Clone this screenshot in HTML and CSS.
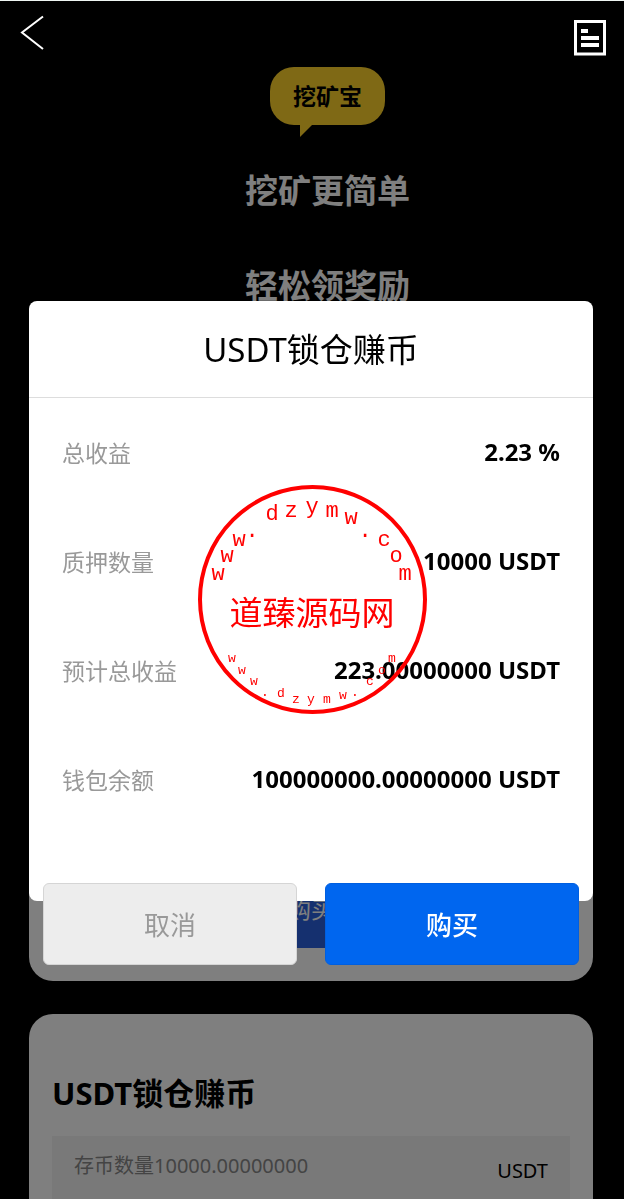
FILE: index.html
```
<!DOCTYPE html>
<html lang="zh-CN">
<head>
    <meta charset="UTF-8">
    <meta name="viewport" content="width=device-width, initial-scale=1.0">
    <title>挖矿宝</title>
    <link rel="stylesheet" href="styles.css">
</head>
<body class="modal-open">
    <header class="topbar">
        <button class="icon-button" type="button" aria-label="返回">
            <svg width="26" height="36" viewBox="0 0 26 36" fill="none" stroke="#fff" stroke-width="2">
                <path d="M23 1.5 L2 17.5 L23 34"/>
            </svg>
        </button>
        <button class="icon-button" type="button" aria-label="订单">
            <svg class="order-icon" width="32" height="36" viewBox="0 0 32 36">
                <rect x="1.5" y="1.5" width="29" height="32.5" fill="none" stroke="#fff" stroke-width="3"/>
                <path d="M7 9h7v4h-7zM7 16h18v4h-18zM7 23h18v4h-18z" fill="#fff"/>
            </svg>
        </button>
    </header>

    <main class="page">
        <section class="hero">
            <div class="bubble">挖矿宝</div>
            <h1>挖矿更简单</h1>
            <h1>轻松领奖励</h1>
        </section>

        <section class="card card-first">
            <button class="card-buy" type="button">购买</button>
        </section>

        <section class="card">
            <h2>USDT锁仓赚币</h2>
            <label class="field">
                <input type="text" placeholder="存币数量10000.00000000">
                <span>USDT</span>
            </label>
        </section>
    </main>

    <div class="overlay">
        <div class="modal" role="dialog" aria-labelledby="modalTitle">
            <div class="modal-content">
                <h3 id="modalTitle">USDT锁仓赚币</h3>
                <dl class="details">
                    <div class="detail"><dt>总收益</dt><dd>2.23 %</dd></div>
                    <div class="detail"><dt>质押数量</dt><dd>10000 USDT</dd></div>
                    <div class="detail"><dt>预计总收益</dt><dd>223.00000000 USDT</dd></div>
                    <div class="detail"><dt>钱包余额</dt><dd>100000000.00000000 USDT</dd></div>
                </dl>
            </div>
            <div class="actions">
                <button class="cancel" type="button">取消</button>
                <button class="confirm" type="button">购买</button>
            </div>
        </div>
    </div>

    <svg class="stamp" width="250" height="250" viewBox="-3 0 250 250">
        <circle cx="122.5" cy="124.5" r="112.5" fill="none" stroke="#f00" stroke-width="4"/>
        <g class="stamp-top">
            <text x="28" y="105">w</text>
            <text x="37" y="87">w</text>
            <text x="49" y="71">w</text>
            <text x="62" y="62">.</text>
            <text x="82" y="45">d</text>
            <text x="101" y="42">z</text>
            <text x="122" y="38">y</text>
            <text x="142" y="42">m</text>
            <text x="161" y="49">w</text>
            <text x="175" y="62">.</text>
            <text x="194" y="71">c</text>
            <text x="206" y="87">o</text>
            <text x="215" y="105">m</text>
        </g>
        <text class="stamp-name" x="122" y="150">道臻源码网</text>
        <g class="stamp-bottom">
            <text x="42" y="187">w</text>
            <text x="52" y="199">w</text>
            <text x="64" y="210">w</text>
            <text x="75" y="221">.</text>
            <text x="91" y="222">d</text>
            <text x="106" y="228">z</text>
            <text x="121" y="228">y</text>
            <text x="137" y="228">m</text>
            <text x="153" y="224">w</text>
            <text x="165" y="221">.</text>
            <text x="180" y="210">c</text>
            <text x="192" y="199">o</text>
            <text x="202" y="187">m</text>
        </g>
    </svg>
</body>
</html>
```
FILE: styles.css
```
* {
    box-sizing: border-box;
}

body {
    margin: 0;
    background-color: #000;
    color: #000;
    font-family: "Noto Sans", "Noto Sans CJK SC", sans-serif;
}

.modal-open {
    height: 100vh;
    overflow: hidden;
}

h1, h2, h3, dl, dd {
    margin: 0;
}

button, input {
    font-family: inherit;
}

button {
    cursor: pointer;
}

/* the top icons stay above the mask */
.topbar {
    position: relative;
    z-index: 20;
    display: flex;
    justify-content: space-between;
    height: 57px;
    padding: 14px 18px 0 20px;
    border-top: 1px solid #eef5f2;
}

.icon-button {
    display: flex;
    align-items: flex-start;
    padding: 0;
    border: none;
    background: none;
}

.order-icon {
    margin-top: 5px;
}

.page {
    padding: 0 31px 0 29px;
}

.hero {
    display: flex;
    flex-direction: column;
    align-items: center;
    padding: 10px 0 33px 33px;
}

.bubble {
    position: relative;
    margin-bottom: 42px;
    padding: 0 23px;
    border-radius: 24px;
    background-color: #ffd22a;
    font-size: 23px;
    font-weight: 700;
    line-height: 58px;
}

.bubble::after {
    content: "";
    position: absolute;
    left: 30px;
    top: 100%;
    border-top: 12px solid #ffd22a;
    border-right: 12px solid transparent;
}

.hero h1 {
    color: #fff;
    font-size: 33px;
    line-height: 48px;
}

.hero h1 + h1 {
    margin-top: 47px;
}

.card {
    display: flex;
    flex-direction: column;
    margin-bottom: 33px;
    padding: 58px 23px 33px;
    border-radius: 24px;
    background-color: #fff;
}

.card-first {
    min-height: 638px;
}

.card h2 {
    margin-bottom: 22px;
    font-size: 31px;
    line-height: 42px;
}

.card-buy {
    height: 78px;
    margin-top: auto;
    padding-bottom: 4px;
    border: none;
    background-color: #2a60de;
    color: #fff;
    font-size: 23px;
}

.field {
    display: flex;
    align-items: center;
    height: 68px;
    padding: 0 22px;
    background-color: #f2f2f2;
    font-size: 20px;
}

.field input {
    flex: 1;
    align-self: flex-start;
    min-width: 0;
    height: 58px;
    padding: 0;
    border: none;
    outline: none;
    background: none;
    font-size: 20px;
}

.field input::placeholder {
    color: #888;
}

.overlay {
    position: fixed;
    inset: 0;
    z-index: 10;
    padding: 301px 31px 0 29px;
    background-color: rgba(0, 0, 0, 0.5);
}

.modal-content {
    padding-bottom: 67px;
    border-radius: 8px;
    background-color: #fff;
}

.modal h3 {
    padding-top: 2px;
    border-bottom: 1px solid #ddd;
    font-size: 33px;
    font-weight: 400;
    line-height: 94px;
    text-align: center;
}

.details {
    padding: 0 33px;
}

.detail {
    display: flex;
    align-items: center;
    justify-content: space-between;
    height: 109px;
    padding-bottom: 2px;
}

.detail dt {
    color: #999;
    font-size: 23px;
}

.detail dd {
    font-size: 24px;
    font-weight: 700;
}

.actions {
    position: relative;
    display: flex;
    gap: 28px;
    margin-top: -18px;
    padding: 0 14px;
}

.actions button {
    flex: 1;
    height: 82px;
    border: 1px solid #d5d5d5;
    border-radius: 6px;
    font-size: 26px;
}

.actions .cancel {
    background-color: #ededed;
    color: #999;
}

.actions .confirm {
    border-color: #005fe0;
    background-color: #0066ef;
    color: #fff;
    font-weight: 500;
}

.stamp {
    position: fixed;
    left: 50%;
    top: 50%;
    z-index: 30;
    transform: translate(-50%, -50%);
    fill: #f00;
    text-anchor: middle;
    pointer-events: none;
}

.stamp-top {
    font-family: "Liberation Mono", monospace;
    font-size: 22px;
}

.stamp-bottom {
    font-family: "Liberation Mono", monospace;
    font-size: 13px;
}

.stamp-name {
    font-size: 33px;
}
```
